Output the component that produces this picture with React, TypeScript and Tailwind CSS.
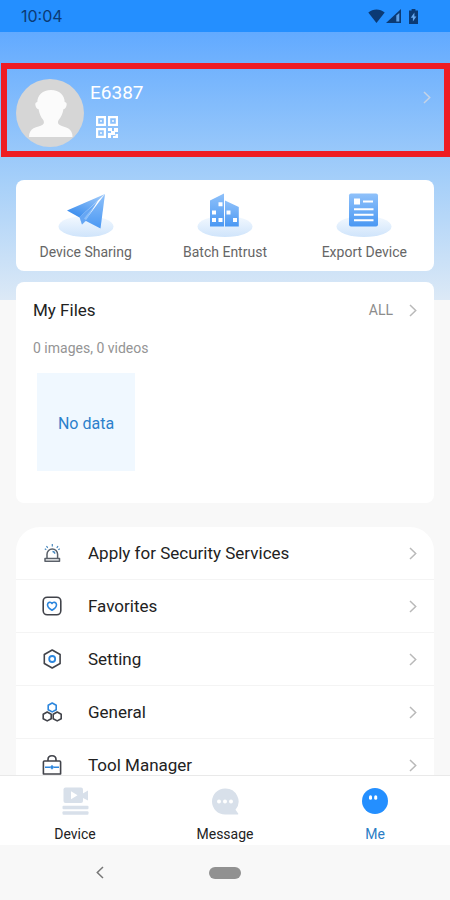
import type { ReactNode } from "react";

function Chevron({ className = "text-[#b9b9b9]" }: { className?: string }) {
  return (
    <svg viewBox="0 0 8 13" className={`h-[13px] w-2 shrink-0 ${className}`} fill="none" stroke="currentColor" strokeWidth="1.5" aria-hidden="true">
      <path d="M1 1l5.700 5.500L1 12" />
    </svg>
  );
}

function StatusBar() {
  return (
    <header className="flex h-8 shrink-0 items-center justify-between bg-[#248fff] pr-8 pl-[21px] text-[#0b3a74]">
      <time className="font-[Inter,sans-serif] text-base leading-5">10:04</time>
      <div className="flex items-center">
        <svg viewBox="0 0 17 14" className="h-[14px] w-[17px]" fill="currentColor" aria-label="Wi-Fi">
          <path d="M0.3 3.6C5-0.6 12-0.6 16.7 3.6L8.5 14z" />
        </svg>
        <svg viewBox="0 0 15 14" className="ml-px h-[14px] w-[15px]" fill="currentColor" aria-label="Signal">
          <path d="M0 14L15 0v14z" />
          <path d="M10.300 6.500L13.300 4v8.600h-3z" fill="#5d9fe6" />
        </svg>
        <svg viewBox="0 0 9 15" className="ml-2 h-[15px] w-[9px]" fill="currentColor" aria-label="Battery charging">
          <path d="M2.600 0h3.800v1.500H9V15H0V1.500h2.600z" />
          <path d="M5.400 3.600L1.800 8.800h2.100v3.800l3.500-5.200H5.400z" fill="#67a8ee" />
        </svg>
      </div>
    </header>
  );
}

function Avatar() {
  return (
    <svg viewBox="0 0 68 68" className="size-[68px] shrink-0" aria-hidden="true">
      <circle cx="34" cy="34" r="34" fill="#d6d6d6" />
      <path
        fill="#fbfbfb"
        d="M35 11c-8.500 0-13.500 5.300-13.700 12-2.200.2-2.400 2.300-1.600 4.200.6 1.800 1.500 2.800 2.900 3 .8 4.600 2.300 8 4.500 10.500 1.200 1.400 1.200 4-.5 5C24.300 47 20.800 47.700 17.500 49.300 14.500 51 13 53.700 13 58h43.500c0-4.300-1.500-7-4.500-8.700-3.300-1.600-6.300-2.300-8.700-3.600-1.700-1-1.700-3.600-.5-5 2.200-2.500 3.900-5.900 4.600-10.500 1.400-.2 2.300-1.200 2.900-3 .8-1.900.6-4-1.600-4.200C48.500 16.300 43.500 11 35 11z"
      />
    </svg>
  );
}

function QrIcon() {
  return (
    <svg viewBox="0 0 22 22" className="size-[22px]" fill="none" stroke="#fff" strokeWidth="2.2" aria-hidden="true">
      <path d="M1.100 1.100h7.800v7.800H1.100zM13.100 1.100h7.800v7.800h-7.800zM1.100 13.100h7.800v7.800H1.100z" />
      <path d="M4 4h2v2H4zM16 4h2v2h-2zM4 16h2v2H4z" fill="#fff" stroke="none" opacity=".7" />
      <path d="M12 12h4v3h-4zM18 12h4v4h-3v3h-4v3h-3v-5h3v-2h3zM19.500 18H22v4h-5v-2h2.500z" fill="#fff" stroke="none" />
    </svg>
  );
}

function Platform({ id, children }: { id: string; children: ReactNode }) {
  return (
    <svg viewBox="0 0 56 46" className="h-[46px] w-14" aria-hidden="true">
      <defs>
        <linearGradient id={`${id}-base`} x1="0" y1="0" x2="0" y2="1">
          <stop offset="0" stopColor="#f3f9ff" />
          <stop offset="1" stopColor="#cfe4fb" />
        </linearGradient>
        <linearGradient id={`${id}-body`} x1="0" y1="0" x2="0" y2="1">
          <stop offset="0" stopColor="#8fc1fa" />
          <stop offset="1" stopColor="#4a98f3" />
        </linearGradient>
        <linearGradient id={`${id}-side`} x1="1" y1="0" x2="0.3" y2="1">
          <stop offset="0" stopColor="#a6cefb" />
          <stop offset="1" stopColor="#3c8eee" />
        </linearGradient>
      </defs>
      <ellipse cx="28" cy="34.500" rx="27.500" ry="10.500" fill={`url(#${id}-base)`} />
      {children}
    </svg>
  );
}

function ShareArt() {
  return (
    <Platform id="share">
      <path d="M47 2L42.500 36.500 27 28.500z" fill="url(#share-body)" />
      <path d="M47 2L9 18.500l12.500 7z" fill="url(#share-side)" />
      <path d="M40 8.500L21.500 25l2.500 7.500 4.500-5z" fill="#8cbff8" />
      <path d="M21.500 25l2.500 7.500 4.500-4L26 26.500l12-15z" fill="#4592f0" opacity=".55" />
    </Platform>
  );
}

function BuildingArt() {
  return (
    <Platform id="building">
      <path d="M13 8.500L27 1.500V34.500H13z" fill="url(#building-body)" />
      <path d="M28 8.500l13.800 6.500V34.500H28z" fill="url(#building-body)" />
      <path fill="#fff" d="M21.500 10.200h4v4h-4zM15 18.500h4v4h-4zM15 26h4v4h-4zM21.500 26h4v4h-4zM29.500 18.500h4v4h-4zM36 26h4v4h-4z" />
    </Platform>
  );
}

function ExportArt() {
  return (
    <Platform id="export">
      <rect x="13" y="1.500" width="29" height="33" rx="2" fill="url(#export-body)" />
      <path fill="#fff" d="M18 6.500h6v6h-6zM27 8.500h10v2H27zM18 16.300h19.500v2H18zM18 21.800h19.500v2H18zM18 27.300h19.500v2H18z" />
    </Platform>
  );
}

const shortcuts = [
  { label: "Device Sharing", art: <ShareArt /> },
  { label: "Batch Entrust", art: <BuildingArt /> },
  { label: "Export Device", art: <ExportArt /> },
];

function MenuIcon({ children }: { children: ReactNode }) {
  return (
    <svg viewBox="0 0 20 20" className="size-5 shrink-0" fill="none" stroke="#41434a" strokeWidth="1.6" strokeLinejoin="round" aria-hidden="true">
      {children}
    </svg>
  );
}

const menu = [
  {
    label: "Apply for Security Services",
    icon: (
      <MenuIcon>
        <path d="M5 15.500v-4.300a5.300 5.300 0 0110.600 0v4.300M3 15.500h14.500v2.800H3z" stroke="#5a6069" strokeWidth="1.500" />
        <path d="M10.300 1v2.500M4.500 3l1.200 1.800M16 3l-1.200 1.800M2.800 5.800l1.500.9M17.800 5.800l-1.500.9" stroke="#4787bd" strokeWidth="1.200" />
        <path d="M10.500 8.500c1.400 0 2.200.8 2.300 2.200" stroke="#4787bd" strokeWidth="1.300" />
      </MenuIcon>
    ),
  },
  {
    label: "Favorites",
    icon: (
      <MenuIcon>
        <rect x="1.200" y="1.200" width="17.600" height="17.600" rx="4" />
        <path d="M10 14.300C7 12.500 5.500 10.700 5.500 8.800 5.500 6.300 8.600 5.300 10 7.500c1.400-2.200 4.500-1.200 4.500 1.300 0 1.900-1.500 3.700-4.500 5.500z" stroke="#2c86dd" />
      </MenuIcon>
    ),
  },
  {
    label: "Setting",
    icon: (
      <MenuIcon>
        <path d="M10.200 1l7.900 4.500v9l-7.900 4.500-7.900-4.500v-9z" />
        <circle cx="10.200" cy="10" r="3" stroke="#2c86dd" strokeWidth="1.800" />
      </MenuIcon>
    ),
  },
  {
    label: "General",
    icon: (
      <MenuIcon>
        <path d="M10.200 1l4 2.200v4.500l-4 2.200-4-2.200V3.200z" stroke="#2c86dd" />
        <path d="M5.200 10l4 2.200v4.500l-4 2.200-4-2.200v-4.500zM15.200 10l4 2.200v4.500l-4 2.200-4-2.200v-4.500z" />
      </MenuIcon>
    ),
  },
  {
    label: "Tool Manager",
    icon: (
      <MenuIcon>
        <path d="M6 6V4.500C6 2 7.600.8 10 .8s4 1.200 4 3.700V6" />
        <path d="M1.400 19V7q0-1 1-1h15.200q1 0 1 1v12z" />
        <path d="M3 12.200h5M12 12.200h5M10 10.200v4" stroke="#2c86dd" />
        <path d="M8.200 12.200h3.600" stroke="#2c86dd" strokeWidth="2" />
      </MenuIcon>
    ),
  },
];

const tabs = [
  {
    label: "Device",
    active: false,
    icon: (
      <svg viewBox="0 0 28 28" className="size-7" fill="#d8e0ea" aria-hidden="true">
        <rect x="2.500" y="0.500" width="19.500" height="15.500" rx="2" />
        <path d="M21 7l6-3.500v10L21 10.500z" />
        <path d="M10 4.300l6.500 4-6.500 4z" fill="#fff" />
        <rect x="1.500" y="18.800" width="26" height="3.500" rx="1" />
        <rect x="1.500" y="24.300" width="26" height="3.500" rx="1" />
      </svg>
    ),
  },
  {
    label: "Message",
    active: false,
    icon: (
      <svg viewBox="0 0 28 28" className="size-7" fill="#d8e0ea" aria-hidden="true">
        <path d="M14 1.500A13 13 0 1014 27.500h12.500c.8 0 1-.7.500-1.200l-2.500-3.500A13 13 0 0014 1.500z" />
        <path d="M8 12.500a2 2 0 110 4 2 2 0 010-4zM14 12.500a2 2 0 110 4 2 2 0 010-4zM20 12.500a2 2 0 110 4 2 2 0 010-4z" fill="#fff" />
      </svg>
    ),
  },
  {
    label: "Me",
    active: true,
    icon: (
      <svg viewBox="0 0 28 28" className="size-7" aria-hidden="true">
        <circle cx="14" cy="14" r="13" fill="#248fff" />
        <rect x="8" y="8.300" width="3" height="4.500" rx="1.500" fill="#fff" />
        <rect x="13.200" y="8.300" width="3" height="4.500" rx="1.500" fill="#fff" />
      </svg>
    ),
  },
];

export default function App() {
  return (
    <div className="flex h-screen flex-col bg-[#f8f8f8] font-[Roboto,sans-serif] text-[#222]">
      <StatusBar />

      <main className="min-h-0 flex-1 overflow-y-auto bg-[linear-gradient(#62aaff,#a5cff9_55%,#dce9f6)] bg-[length:100%_268px] bg-no-repeat pt-[31px] [scrollbar-width:none]">
        <button type="button" className="ml-px flex w-[calc(100%-1px)] items-start border-6 border-[#ee1c24] pt-[10px] pr-[13px] pb-1 pl-[9px] text-left">
          <Avatar />
          <span className="ml-[6px] flex flex-1 flex-col">
            <span className="text-[19px] leading-7 text-white">E6387</span>
            <span className="mt-[9px] ml-[6px]">
              <QrIcon />
            </span>
          </span>
          <span className="mt-3">
            <Chevron className="text-[#c5d3e6]" />
          </span>
        </button>

        <section className="mx-4 mt-[23px] grid grid-cols-3 rounded-lg bg-white pt-3 pb-[9px]">
          {shortcuts.map((item) => (
            <button key={item.label} type="button" className="flex flex-col items-center gap-1 text-sm leading-5 text-[#666]">
              {item.art}
              {item.label}
            </button>
          ))}
        </section>

        <section className="mx-4 mt-[11px] rounded-lg bg-white px-[17px] pt-4 pb-8">
          <div className="flex items-center justify-between">
            <h2 className="text-[17px] leading-6">My Files</h2>
            <button type="button" className="flex items-center gap-4 text-sm leading-6 text-[#8c8c8c]">
              ALL
              <Chevron />
            </button>
          </div>
          <p className="mt-4 text-sm leading-5 text-[#949494]">0 images, 0 videos</p>
          <div className="mt-[15px] ml-1 flex h-[98px] w-[98px] items-center justify-center bg-[#f0f8ff] pt-[3px] text-base text-[#2b80cb]">
            No data
          </div>
        </section>

        <nav className="mx-4 mt-6 overflow-hidden rounded-t-3xl bg-white" aria-label="Account">
          <ul className="divide-y divide-[#f4f4f4]">
            {menu.map((item) => (
              <li key={item.label}>
                <button type="button" className="flex w-full items-center py-[14px] pr-[17px] pl-[26px] text-left text-[17px] leading-6">
                  {item.icon}
                  <span className="ml-[26px] flex-1">{item.label}</span>
                  <Chevron />
                </button>
              </li>
            ))}
          </ul>
        </nav>
      </main>

      <nav className="grid shrink-0 grid-cols-3 border-t border-[#e9e9e9] bg-white pt-[11px] pb-px" aria-label="Main">
        {tabs.map((tab) => (
          <button
            key={tab.label}
            type="button"
            aria-current={tab.active ? "page" : undefined}
            className={`flex flex-col items-center gap-[9px] text-sm leading-5 ${tab.active ? "text-[#2b7cc4]" : "text-[#222]"}`}
          >
            {tab.icon}
            {tab.label}
          </button>
        ))}
      </nav>

      <footer className="grid h-[55px] shrink-0 grid-cols-9 items-center">
        <button type="button" aria-label="Back" className="col-start-2 col-end-4 flex justify-center">
          <svg viewBox="0 0 8 13" className="h-[13px] w-2" fill="none" stroke="#777" strokeWidth="1.500">
            <path d="M7 1L1.300 6.500 7 12" />
          </svg>
        </button>
        <button type="button" aria-label="Home" className="col-start-4 col-end-7 h-3 w-8 justify-self-center rounded-full bg-[#919191]" />
      </footer>
    </div>
  );
}
